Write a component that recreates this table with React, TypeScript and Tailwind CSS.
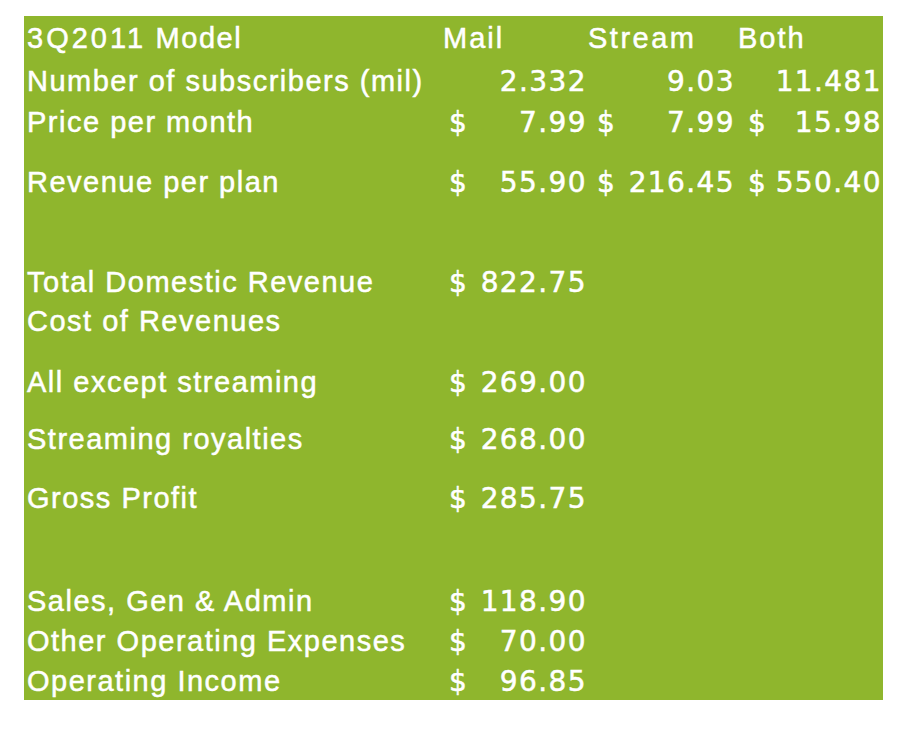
import React from "react";

type Money = { d?: boolean; v: string } | null;

const rows: {
  h: string;
  label: string;
  b?: Money;
  c?: Money;
  e?: Money;
  header?: boolean;
}[] = [
  { h: "h-[41px]", label: "", header: true },
  { h: "h-[43px]", label: "Number of subscribers (mil)", b: { v: "2.332" }, c: { v: "9.03" }, e: { v: "11.481" } },
  { h: "h-[41px]", label: "Price per month", b: { d: true, v: "7.99" }, c: { d: true, v: "7.99" }, e: { d: true, v: "15.98" } },
  { h: "h-[60px]", label: "Revenue per plan", b: { d: true, v: "55.90" }, c: { d: true, v: "216.45" }, e: { d: true, v: "550.40" } },
  { h: "h-[40px]", label: "" },
  { h: "h-[60px]", label: "Total Domestic Revenue", b: { d: true, v: "822.75" } },
  { h: "h-[39px]", label: "Cost of Revenues" },
  { h: "h-[61px]", label: "All except streaming", b: { d: true, v: "269.00" } },
  { h: "h-[57px]", label: "Streaming royalties", b: { d: true, v: "268.00" } },
  { h: "h-[59px]", label: "Gross Profit", b: { d: true, v: "285.75" } },
  { h: "h-[43px]", label: "" },
  { h: "h-[60px]", label: "Sales, Gen & Admin", b: { d: true, v: "118.90" } },
  { h: "h-[40px]", label: "Other Operating Expenses", b: { d: true, v: "70.00" } },
  { h: "h-[40px]", label: "Operating Income", b: { d: true, v: "96.85" } },
];

const numFont = { fontFamily: '"DejaVu Sans", Verdana, sans-serif' };

function MoneyCell({ m, pr }: { m?: Money; pr: string }) {
  if (!m) return <div />;
  return (
    <div
      className={`flex items-end justify-between pb-[4px] pl-[10px] text-[28px] leading-[28px] tracking-[1.4px] ${pr}`}
      style={numFont}
    >
      <span>{m.d ? "$" : ""}</span>
      <span>{m.v}</span>
    </div>
  );
}

export default function App() {
  return (
    <div className="min-h-[742px] w-[916px] bg-white pt-[16px] pl-[24px]">
      <div
        className="w-[859px] bg-[#8fb62d] text-white text-[29px] leading-[29px] tracking-[1.5px] [-webkit-text-stroke:0.5px_white]"
        style={{ fontFamily: '"Liberation Sans", Arial, sans-serif' }}
      >
        {rows.map((r, i) => (
          <div key={i} className={`grid grid-cols-[415px_148px_151px_145px] ${r.h}`}>
            <div className="flex items-end whitespace-nowrap pb-[4px] pl-[3px]">
              {r.header ? (
                <span>
                  <span className="tracking-[3px]">3Q2011</span> Model
                </span>
              ) : (
                r.label
              )}
            </div>
            {r.header ? (
              <>
                <div className="flex items-end pb-[4px] pl-[4px] tracking-[2px]">Mail</div>
                <div className="flex items-end pb-[4px] pl-[1px] tracking-[2.5px]">Stream</div>
                <div className="flex items-end pb-[4px] tracking-[2px]">Both</div>
              </>
            ) : (
              <>
                <MoneyCell m={r.b} pr="pr-0" />
                <MoneyCell m={r.c} pr="pr-[3px]" />
                <MoneyCell m={r.e} pr="pr-[1px]" />
              </>
            )}
          </div>
        ))}
      </div>
    </div>
  );
}
